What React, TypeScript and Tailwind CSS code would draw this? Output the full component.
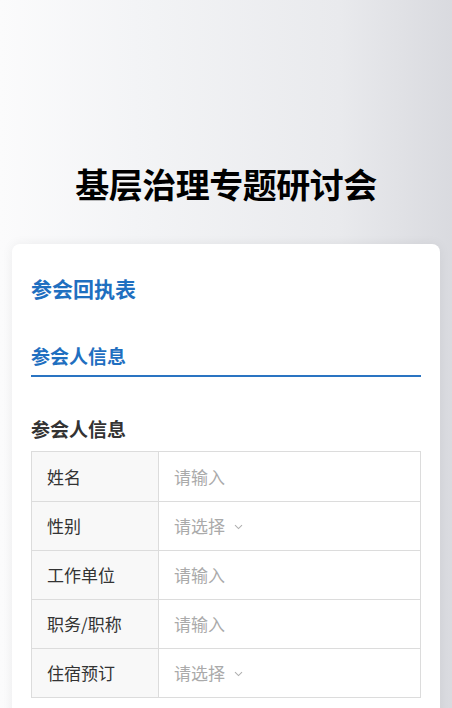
import React from "react";

const rows: { label: string; placeholder: string; select?: boolean }[] = [
  { label: "姓名", placeholder: "请输入" },
  { label: "性别", placeholder: "请选择", select: true },
  { label: "工作单位", placeholder: "请输入" },
  { label: "职务/职称", placeholder: "请输入" },
  { label: "住宿预订", placeholder: "请选择", select: true },
];

export default function App() {
  return (
    <div
      className="w-[452px] h-[708px] overflow-hidden bg-[linear-gradient(90deg,#fbfbfc_0%,#f3f4f6_30%,#e9eaed_75%,#d9dadf_100%)]"
      style={{ fontFamily: '"Noto Sans CJK SC", "Noto Sans", sans-serif' }}
    >
      <div className="h-[244px] flex items-start justify-center pt-[160px]">
        <h1 className="text-[34px] leading-[48px] font-bold text-black tracking-[-0.5px]">
          基层治理专题研讨会
        </h1>
      </div>
      <div className="mx-[12px] bg-white rounded-[8px] shadow-[0_0_12px_rgba(0,0,0,0.06)] px-[19px] pt-[28px] pb-[40px]">
        <div className="text-[21px] leading-[32px] font-bold text-[#1f6fc0]">参会回执表</div>
        <div className="mt-[38px] border-b-2 border-[#2a74c2] pb-[5px]">
          <div className="text-[19px] leading-[28px] font-bold text-[#1f6fc0]">参会人信息</div>
        </div>
        <div className="mt-[38px] text-[19px] leading-[28px] font-bold text-[#333]">参会人信息</div>
        <div className="mt-[8px] border border-[#dcdcdc]">
          {rows.map((r, i) => (
            <div
              key={r.label}
              className={`flex h-[49px] ${i > 0 ? "border-t border-[#dcdcdc]" : ""}`}
            >
              <div className="w-[127px] shrink-0 bg-[#f8f8f8] border-r border-[#dcdcdc] flex items-center pl-[15px] text-[17px] text-[#333]">
                {r.label}
              </div>
              <div className="flex-1 flex items-center pl-[15px] text-[17px] text-[#aaaaaa]">
                {r.placeholder}
                {r.select && (
                  <svg className="ml-[9px] mt-[2px]" width="9" height="6" viewBox="0 0 9 6" fill="none">
                    <path d="M1 1.2 L4.5 4.6 L8 1.2" stroke="#b0b0b0" strokeWidth="1.1" />
                  </svg>
                )}
              </div>
            </div>
          ))}
        </div>
      </div>
    </div>
  );
}
